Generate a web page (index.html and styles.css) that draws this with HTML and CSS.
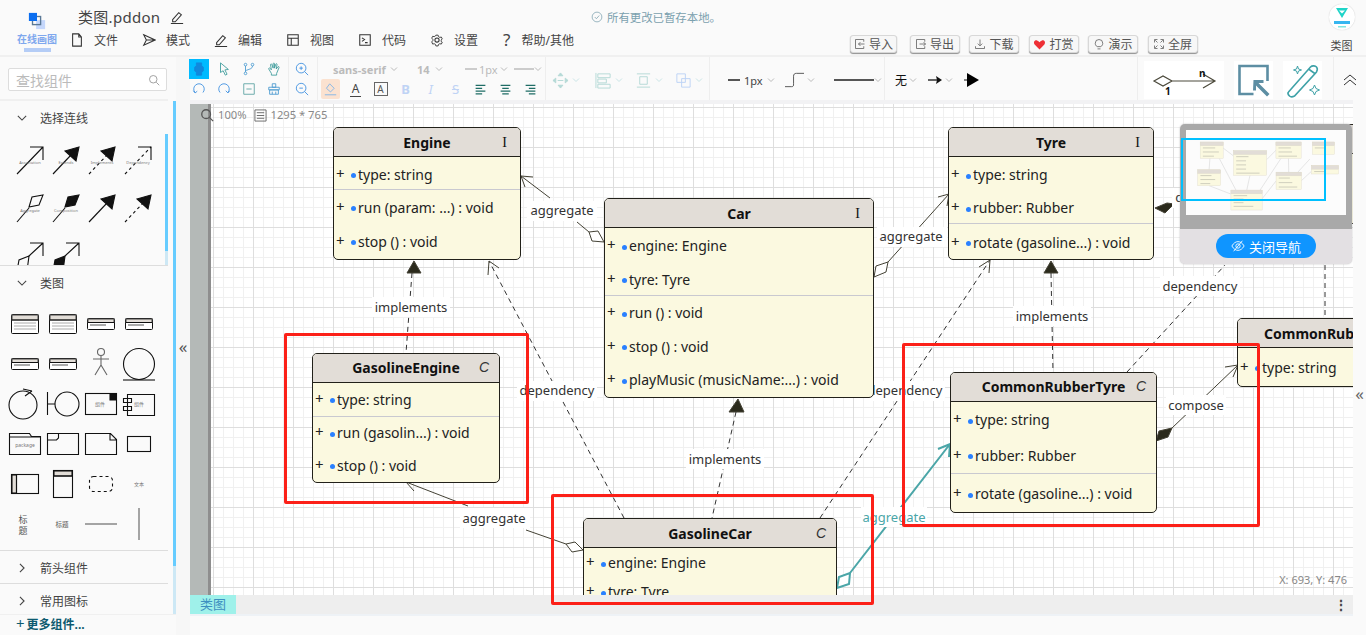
FILE: index.html
```html
<!DOCTYPE html>
<html lang="zh-CN">
<head>
    <meta charset="UTF-8">
    <title>类图.pddon</title>
    <link rel="stylesheet" href="styles.css">
</head>
<body>
    <svg class="defs" width="0" height="0">
        <defs>
            <symbol id="i-doc" viewBox="0 0 16 16"><path d="M3 1h7l3 3.500V15H3zM10 1v3.500h3"/></symbol>
            <symbol id="i-send" viewBox="0 0 16 16"><path d="M2 2l13 6-13 6 3-6zM5 8h10"/></symbol>
            <symbol id="i-pen" viewBox="0 0 16 16"><path d="M3 11l7-8 3 2.500-7 8H3zM1 15.500h14"/></symbol>
            <symbol id="i-layout" viewBox="0 0 16 16"><path d="M2 2h12v12H2zM2 6h12M6 6v8"/></symbol>
            <symbol id="i-term" viewBox="0 0 16 16"><path d="M2 2h12v12H2zM4.500 5.500l3 2-3 2M8 11h3"/></symbol>
            <symbol id="i-gear" viewBox="0 0 16 16"><path d="M6.500 1.500h3l.5 2 1.800 1 2-.5 1.300 2.500-1.500 1.500 0 1-.0 1 1.500 1-1.300 2.500-2-.5-1.800 1-.5 2h-3l-.5-2-1.800-1-2 .5L.9 10.500l1.500-1.500V7L.9 5.500l1.300-2.500 2 .5 1.800-1z" transform="translate(1.200 1.200) scale(.85)"/><circle cx="8" cy="8" r="2.400"/></symbol>
            <symbol id="i-import" viewBox="0 0 16 16"><path d="M13 5V2H2v12h11v-3M14 8H6M8.500 5.500L6 8l2.500 2.500"/></symbol>
            <symbol id="i-export" viewBox="0 0 16 16"><path d="M13 5V2H2v12h11v-3M6 8h8M11.500 5.500L14 8l-2.500 2.500"/></symbol>
            <symbol id="i-down" viewBox="0 0 16 16"><path d="M8 2v8M5 7.500L8 10.500l3-3M2 11v3h12v-3"/></symbol>
            <symbol id="i-bulb" viewBox="0 0 16 16"><path d="M5.500 11.500C3.800 10.300 3 9 3 7a5 5 0 0110 0c0 2-.8 3.300-2.500 4.500zM6 14.500h4"/></symbol>
            <symbol id="i-full" viewBox="0 0 16 16"><path d="M2 6V2h4M10 2h4v4M14 10v4h-4M6 14H2v-4M3 3l3 3M13 3l-3 3M13 13l-3-3M3 13l3-3"/></symbol>
            <symbol id="i-search" viewBox="0 0 16 16"><circle cx="7" cy="7" r="5"/><path d="M11 11l4 4"/></symbol>
            <symbol id="i-chev" viewBox="0 0 8 8"><path d="M1 2.500l3 3 3-3"/></symbol>
            <symbol id="i-circle-check" viewBox="0 0 16 16"><circle cx="8" cy="8" r="6.500"/><path d="M5 8l2.200 2.300L11 6"/></symbol>
            <symbol id="i-shape" viewBox="0 0 16 16"><path d="M5 1h6v3l2 2v4l-2 2v3H5v-3l-2-2V6l2-2z" fill="currentColor"/></symbol>
            <symbol id="i-cursor" viewBox="0 0 16 16"><path d="M4 1l9 7.500-4 .5 2.500 5-2 1-2.500-5L4 12z"/></symbol>
            <symbol id="i-branch" viewBox="0 0 16 16"><circle cx="4" cy="3" r="1.500"/><circle cx="12" cy="3" r="1.500"/><circle cx="4" cy="13" r="1.500"/><path d="M4 4.500v7M12 4.500C12 8 8 8 4 10"/></symbol>
            <symbol id="i-hand" viewBox="0 0 16 16"><path d="M5 13L2 8c-.5-1 1-1.800 1.600-.8L5 9 4 3c0-1 1.500-1 1.700 0L7 7V2c0-1 1.600-1 1.600 0v5l1.400-4.500c.3-1 1.700-.6 1.500.4L10.500 8l2-2.500c.7-.8 1.800 0 1.200 1L11 13v2H5z"/></symbol>
            <symbol id="i-undo" viewBox="0 0 16 16"><path d="M3.500 12A6 6 0 1112.500 12M1.500 10l2 2.500 2.500-2"/></symbol>
            <symbol id="i-redo" viewBox="0 0 16 16"><path d="M3.500 12A6 6 0 1112.500 12M10 10l2.500 2.500 2-2.500"/></symbol>
            <symbol id="i-minus" viewBox="0 0 16 16"><path d="M2 2h12v12H2zM5 8h6"/></symbol>
            <symbol id="i-brush" viewBox="0 0 16 16"><path d="M6 2h4v4H6zM2 6h12v3H2zM3 9h10v5H3zM6 11v3M10 11v3"/></symbol>
            <symbol id="i-zoomin" viewBox="0 0 16 16"><circle cx="7" cy="7" r="5.500"/><path d="M11 11l4 4M5 7h4M7 5v4"/></symbol>
            <symbol id="i-zoomout" viewBox="0 0 16 16"><circle cx="7" cy="7" r="5.500"/><path d="M11 11l4 4M5 7h4"/></symbol>
            <symbol id="i-fill" viewBox="0 0 16 16"><path d="M7 1l5.500 5.500L8 11 3 6.500zM1 14.500h14"/></symbol>
            <symbol id="i-align-l" viewBox="0 0 16 16"><path d="M2 3h12M2 6.500h8M2 10h12M2 13.500h8"/></symbol>
            <symbol id="i-align-c" viewBox="0 0 16 16"><path d="M2 3h12M4 6.500h8M2 10h12M4 13.500h8"/></symbol>
            <symbol id="i-align-r" viewBox="0 0 16 16"><path d="M2 3h12M6 6.500h8M2 10h12M6 13.500h8"/></symbol>
            <symbol id="i-move" viewBox="0 0 18 18"><path d="M9 1l2.500 3h-5zM9 17l2.500-3h-5zM1 9l3-2.500v5zM17 9l-3-2.500v5z" fill="currentColor"/><path d="M6 9h6"/></symbol>
            <symbol id="i-stack" viewBox="0 0 18 18"><path d="M1 1v16M3 2h13v4H3zM3 7.500h9v4H3zM3 13h13v4H3z"/></symbol>
            <symbol id="i-space" viewBox="0 0 18 18"><path d="M2 2h14M2 16h14M5 5h8v8H5z"/></symbol>
            <symbol id="i-layer" viewBox="0 0 18 18"><path d="M2 2h9v9H2zM7 7h9v9H7z"/></symbol>
        </defs>
    </svg>

    <header class="topbar">
        <div class="logo">
            <svg class="logo-mark" viewBox="0 0 20 20"><rect x="9" y="9" width="10" height="10" fill="#c5d7fb"/><rect x="5" y="5" width="9" height="9" fill="none" stroke="#5a7896" stroke-width="1.500"/><rect x="1" y="1" width="9" height="9" fill="#0b6ef0"/></svg>
            <span class="logo-name">在线画图</span>
            <span class="logo-bar"></span>
        </div>
        <div class="top-main">
            <div class="title-row">
                <span class="file-name">类图.pddon</span>
                <svg class="ico ico-title"><use href="#i-pen"/></svg>
            </div>
            <nav class="menu">
                <a class="menu-item"><svg class="ico"><use href="#i-doc"/></svg>文件</a>
                <a class="menu-item"><svg class="ico"><use href="#i-send"/></svg>模式</a>
                <a class="menu-item"><svg class="ico"><use href="#i-pen"/></svg>编辑</a>
                <a class="menu-item"><svg class="ico"><use href="#i-layout"/></svg>视图</a>
                <a class="menu-item"><svg class="ico"><use href="#i-term"/></svg>代码</a>
                <a class="menu-item"><svg class="ico"><use href="#i-gear"/></svg>设置</a>
                <a class="menu-item"><span class="ico-q">?</span>帮助/其他</a>
            </nav>
        </div>
        <div class="save-state"><svg class="ico-save"><use href="#i-circle-check"/></svg>所有更改已暂存本地。</div>
        <div class="top-actions">
            <button class="act act-1"><svg class="ico-act"><use href="#i-import"/></svg>导入</button>
            <button class="act"><svg class="ico-act"><use href="#i-export"/></svg>导出</button>
            <button class="act"><svg class="ico-act"><use href="#i-down"/></svg>下载</button>
            <button class="act"><svg class="ico-heart" viewBox="0 0 16 16"><path d="M8 14L2 8c-2-2.500 0-6 3-5 1.300.4 2.300 1.200 3 2.200C8.700 4.200 9.700 3.400 11 3c3-1 5 2.500 3 5z"/></svg>打赏</button>
            <button class="act"><svg class="ico-act"><use href="#i-bulb"/></svg>演示</button>
            <button class="act"><svg class="ico-act"><use href="#i-full"/></svg>全屏</button>
        </div>
        <div class="user">
            <span class="avatar"><svg viewBox="0 0 26 26"><path d="M7 4h12l-6 10z" fill="#1fd4c8"/><path d="M10 6.500h6l-3 3z" fill="#fff"/><rect x="5" y="17" width="16" height="3" fill="#37b6f0"/><rect x="9" y="22" width="8" height="1.500" fill="#7fe6e0"/></svg></span>
            <span class="user-name">类图</span>
        </div>
    </header>

    <div class="workspace">
        <aside class="sidebar">
            <div class="search-wrap">
                <div class="search">查找组件<svg class="ico-find"><use href="#i-search"/></svg></div>
            </div>
            <div class="panels">
                <section class="panel panel-lines">
                    <h3 class="panel-head"><svg class="ico-fold" viewBox="0 0 12 12"><path d="M1 3.500l5 5 5-5"/></svg>选择连线</h3>
                    <svg class="palette palette-lines" viewBox="0 0 165 136">
                        <g class="sk">
                            <g transform="translate(17 16)"><path d="M0 29L26 2M13 2h13v13"/><text class="tiny" x="13" y="19">Association</text></g>
                            <g transform="translate(53 16)"><path d="M0 29l18-19"/><path class="bk" d="M12 6l14-4-3 14z"/><text class="tiny" x="13" y="19">Extends</text></g>
                            <g transform="translate(89 16)"><path class="dash" d="M0 29l18-19"/><path class="bk" d="M12 6l14-4-3 14z"/><text class="tiny" x="13" y="19">Implements</text></g>
                            <g transform="translate(125 16)"><path class="dash" d="M0 29L26 2"/><path d="M13 2h13v13"/><text class="tiny" x="13" y="19">Dependency</text></g>
                            <g transform="translate(17 64)"><path d="M0 29l12-14"/><path d="M12 14l3-10 11-2-4 10z"/><text class="tiny" x="13" y="19">Aggregate</text></g>
                            <g transform="translate(53 64)"><path d="M0 29l12-14"/><path class="bk" d="M12 14l3-10 11-2-4 10z"/><text class="tiny" x="13" y="19">Composition</text></g>
                            <g transform="translate(89 64)"><path d="M0 29l18-19"/><path class="bk" d="M12 6l14-4-3 14z"/></g>
                            <g transform="translate(125 64)"><path class="dash" d="M0 29l18-19"/><path class="bk" d="M12 6l14-4-3 14z"/></g>
                            <g transform="translate(17 112)"><path d="M12 15L26 2M13 2h13v13"/><path d="M12 15l-10 4-2 11h10z"/></g>
                            <g transform="translate(53 112)"><path d="M12 15L26 2M13 2h13v13"/><path class="bk" d="M12 15l-10 4-2 11h10z"/></g>
                        </g>
                    </svg>
                    <span class="scroll-inner"></span>
                </section>
                <section class="panel panel-class">
                    <h3 class="panel-head"><svg class="ico-fold" viewBox="0 0 12 12"><path d="M1 3.500l5 5 5-5"/></svg>类图</h3>
                    <svg class="palette palette-class" viewBox="0 0 165 250">
                        <defs>
                            <g id="m-big"><rect x=".5" y=".5" width="27" height="19" rx="1" fill="#fff" stroke="#111"/><rect x="1" y="1" width="26" height="5" fill="#e2ddd7"/><path d="M1 6h26" stroke="#111"/><path d="M3 9h22M3 12h22M3 15h22" stroke="#aaa"/></g>
                            <g id="m-small"><rect x=".5" y=".5" width="27" height="11" rx="1" fill="#fff" stroke="#111"/><rect x="1" y="1" width="26" height="3.500" fill="#e2ddd7"/><path d="M1 4.500h26" stroke="#111"/><path d="M3 7h16" stroke="#aaa" stroke-width="2"/></g>
                        </defs>
                        <use href="#m-big" x="11" y="19"/><use href="#m-big" x="49" y="19"/><use href="#m-small" x="87" y="23"/><use href="#m-small" x="125" y="23"/>
                        <use href="#m-small" x="11" y="63"/><use href="#m-small" x="49" y="63"/>
                        <g class="sk">
                            <g class="gr"><circle cx="101" cy="57" r="3.500"/><path d="M101 61v9M93 64h16M101 70l-6 10M101 70l6 10"/></g>
                            <circle cx="139" cy="69" r="15.500"/><path d="M123 85h32"/>
                            <circle cx="23" cy="110" r="14"/><path d="M23 94l9 2M25 101l7-5"/>
                            <g transform="translate(0 5)">
                                <path d="M47.500 92v23M48 104h7"/><circle cx="67" cy="104" r="12"/>
                                <rect x="85.500" y="93.500" width="31" height="21"/><path class="bk" d="M110 94h6v6h-6z"/><text class="tiny big" x="100" y="106">组件</text>
                                <path d="M127.500 94.500h27v21h-27zM123.500 98.500h8v4h-8zM123.500 106.500h8v4h-8z"/><text class="tiny big" x="139" y="106">组件</text>
                                <path d="M9.500 133.500v21h31v-18h-9l-2-3zM9.500 137h31"/><text class="tiny big" x="25" y="147">package</text>
                                <path d="M47.500 133.500h31v21h-31zM47.500 140h9l2-2v-4.500"/>
                                <path d="M85.500 133.500h25l6 6v15h-31zM110 134v6h6"/>
                                <rect x="127.500" y="136.500" width="23" height="15"/>
                                <rect x="11.500" y="174.500" width="27" height="19"/><rect x="12" y="175" width="4.500" height="18" fill="#e2ddd7"/><path d="M16.500 175v18"/>
                                <rect x="53.500" y="170.500" width="19" height="27"/><rect x="54" y="171" width="18" height="5" fill="#e2ddd7"/><path d="M54 176h18"/>
                                <rect class="dash" x="89.500" y="176.500" width="23" height="15" rx="4"/>
                                <path class="gr2" d="M85 224h32M139 208v32"/>
                            </g>
                        </g>
                        <text class="tiny big" x="139" y="191">文本</text>
                        <text class="tiny title" x="23" y="228">标</text>
                        <text class="tiny title" x="23" y="239">题</text>
                        <text class="tiny title2" x="62" y="232">标题</text>
                    </svg>
                </section>
                <h3 class="panel-head panel-closed panel-sep"><svg class="ico-fold" viewBox="0 0 12 12"><path d="M3.500 1l5 5-5 5"/></svg>箭头组件</h3>
                <h3 class="panel-head panel-closed"><svg class="ico-fold" viewBox="0 0 12 12"><path d="M3.500 1l5 5-5 5"/></svg>常用图标</h3>
            </div>
            <div class="more"><span class="more-plus">+</span>更多组件...</div>
        </aside>

        <div class="divider">«</div>

        <main class="stage">
            <div class="toolbar">
                <div class="tool-group tools-grid">
                    <span class="tool tool-on"><svg><use href="#i-shape"/></svg></span>
                    <span class="tool teal"><svg><use href="#i-cursor"/></svg></span>
                    <span class="tool bluet"><svg><use href="#i-branch"/></svg></span>
                    <span class="tool teal"><svg><use href="#i-hand"/></svg></span>
                    <span class="tool blue"><svg><use href="#i-undo"/></svg></span>
                    <span class="tool blue"><svg><use href="#i-redo"/></svg></span>
                    <span class="tool teal-d"><svg><use href="#i-minus"/></svg></span>
                    <span class="tool bluet"><svg><use href="#i-brush"/></svg></span>
                </div>
                <div class="tool-group tools-zoom">
                    <span class="tool blue"><svg><use href="#i-zoomin"/></svg></span>
                    <span class="tool blue"><svg><use href="#i-zoomout"/></svg></span>
                </div>
                <div class="tool-group tools-text">
                    <div class="text-top">
                        <span class="pick pick-font">sans-serif<svg class="chev"><use href="#i-chev"/></svg></span>
                        <span class="pick pick-size">14<svg class="chev"><use href="#i-chev"/></svg></span>
                        <span class="pick pick-line"><i class="bar bar-s"></i>1px<svg class="chev"><use href="#i-chev"/></svg></span>
                        <span class="pick pick-style"><i class="bar bar-l"></i><svg class="chev"><use href="#i-chev"/></svg></span>
                    </div>
                    <div class="text-bottom">
                        <span class="tool-s tool-fill"><svg><use href="#i-fill"/></svg></span>
                        <span class="tool-s glyph">A<i></i></span>
                        <span class="tool-s glyph-box">A</span>
                        <span class="tool-s fmt b">B</span>
                        <span class="tool-s fmt i">I</span>
                        <span class="tool-s fmt s">S</span>
                        <span class="tool-s dk"><svg><use href="#i-align-l"/></svg></span>
                        <span class="tool-s dk"><svg><use href="#i-align-c"/></svg></span>
                        <span class="tool-s dk"><svg><use href="#i-align-r"/></svg></span>
                    </div>
                </div>
                <div class="tool-group tools-arrange">
                    <span class="arr arr-1"><svg><use href="#i-move"/></svg><svg class="chev"><use href="#i-chev"/></svg></span>
                    <span class="arr"><svg><use href="#i-stack"/></svg><svg class="chev"><use href="#i-chev"/></svg></span>
                    <span class="arr"><svg><use href="#i-space"/></svg><svg class="chev"><use href="#i-chev"/></svg></span>
                    <span class="arr arr-blue"><svg><use href="#i-layer"/></svg><svg class="chev"><use href="#i-chev"/></svg></span>
                </div>
                <div class="tool-group tools-line">
                    <span class="ln ln-width"><i class="bar bar-d"></i>1px<svg class="chev"><use href="#i-chev"/></svg></span>
                    <span class="ln ln-step"><svg class="step" viewBox="0 0 20 16"><path d="M0 15h7c2 0 2-1 2-3V4c0-2 1-3 3-3h8"/></svg><svg class="chev"><use href="#i-chev"/></svg></span>
                    <span class="ln ln-solid"><i class="bar bar-long"></i><svg class="chev"><use href="#i-chev"/></svg></span>
                </div>
                <div class="tool-group tools-head">
                    <span class="head-none">无<svg class="chev"><use href="#i-chev"/></svg></span>
                    <span class="head-arrow"><svg class="harrow" viewBox="0 0 14 10"><path d="M0 5h9" stroke="#111" stroke-width="1.300"/><path d="M8 1l6 4-6 4 1-4z" fill="#111"/></svg><svg class="chev"><use href="#i-chev"/></svg></span>
                    <span class="head-big"><svg class="hbig" viewBox="0 0 15 14"><path d="M0 7h4" stroke="#111"/><path d="M3 0l12 7-12 7z" fill="#000"/></svg></span>
                </div>
                <div class="tool-group tools-cards">
                    <span class="card card-rel"><svg viewBox="0 0 80 38"><path d="M10 20l9-5 9 5-9 5zM28 20h43M59 13l12 7-12 7" fill="none" stroke="#4c4a3c" stroke-width="1.200"/><text x="21" y="34" class="card-num">1</text><text x="55" y="16" class="card-num">n</text></svg></span>
                    <span class="card card-sel"><svg viewBox="0 0 38 38"><path d="M33 20V5H5v28h14" fill="none" stroke="#5d8ea3" stroke-width="2.600"/><path d="M19 19h10v3h-5l11 11-2.500 2.500-11-11v5h-3z" fill="#5d8ea3"/></svg></span>
                    <span class="card card-wand"><svg viewBox="0 0 38 38"><path d="M5 31L27 6c2-2 5-1 6 0s1 3 0 5L11 35c-2 1-4 1-5 0s-2-3-1-4zM25 8l7 5" fill="none" stroke="#3fa2a8" stroke-width="1.600"/><path d="M14 5l1 3 3 1-3 1-1 3-1-3-3-1 3-1zM31 24l1.500 3.500 3.500 1.500-3.500 1.500L31 34l-1.500-3.500-3.500-1.500 3.500-1.500z" fill="none" stroke="#3fa2a8"/></svg></span>
                </div>
                <div class="tool-fold"><svg viewBox="0 0 14 12"><path d="M1 6l6-5 6 5M1 11l6-5 6 5"/></svg></div>
            </div>

            <div class="canvas-band"></div>
            <div class="canvas">
                <span class="ruler"></span>
                <div class="zoom-info"><svg class="ico-zoominfo"><use href="#i-search"/></svg><span>100%</span><svg class="ico-page" viewBox="0 0 14 14"><path d="M1 1h12v12H1zM3 4h8M3 7h8M3 10h8"/></svg><span>1295 * 765</span></div>

                <svg class="edges" viewBox="190 104 1163 491">
                    <g class="edge">
                        <path d="M521 176l29 22M577 222l12 10M533 177l-12-1 4 11"/>
                        <path class="hollow" d="M589 232l9-1 6 11-12-1z"/>
                        <path class="solid-h" d="M414 261l7 12h-14z"/>
                        <path class="dashed" d="M412 273l-6 80"/>
                        <path class="dashed" d="M624 518L489 261"/>
                        <path d="M488 275l1-14 10 7"/>
                        <path d="M888 262l61-68M938 197l11-3-2 12"/>
                        <path class="hollow" d="M874 277l2-11 12-4-2 10z"/>
                        <path class="solid-h" d="M738 399l6 13h-15z"/>
                        <path class="dashed" d="M736 412l-24 106"/>
                        <path class="dashed" d="M820 518L990 260"/>
                        <path d="M979 267l11-7-1 13"/>
                        <path class="solid-h" d="M1051 261l7 12h-14z"/>
                        <path class="dashed" d="M1051 273l2 99"/>
                        <path class="solid-h" d="M1155 208l12-5 7 1-9 9z"/>
                        <path class="dashed" d="M1127 372l98-107"/>
                        <path class="solid-h" d="M1156 441l3-10 13-3-4 9z"/>
                        <path d="M1172 428l66-63M1225 367l13-2-5 12"/>
                        <path class="dashed" d="M1325 265v53"/>
                        <path d="M406 482l62 24M526 530l40 14M418 481l-12 1 8 9"/>
                        <path class="hollow" d="M566 544l9-2 8 8-11 2z"/>
                        <path class="teal-edge" d="M850 573l100-129M938 449l12-5-1 13"/>
                        <path class="teal-edge hollow-t" d="M837 588l2-11 11-4-1 11z"/>
                    </g>
                    <g class="labels">
                        <rect x="527" y="201" width="70" height="20"/><text x="562" y="215">aggregate</text>
                        <rect x="877" y="227" width="70" height="20"/><text x="911" y="241">aggregate</text>
                        <rect x="372" y="297" width="78" height="20"/><text x="411" y="312">implements</text>
                        <rect x="517" y="381" width="80" height="20"/><text x="557" y="395">dependency</text>
                        <rect x="686" y="449" width="78" height="20"/><text x="725" y="464">implements</text>
                        <rect x="865" y="381" width="80" height="20"/><text x="905" y="395">dependency</text>
                        <rect x="1013" y="306" width="78" height="20"/><text x="1052" y="321">implements</text>
                        <rect x="1160" y="276" width="80" height="20"/><text x="1200" y="291">dependency</text>
                        <rect x="1166" y="395" width="60" height="20"/><text x="1196" y="410">compose</text>
                        <rect x="460" y="508" width="70" height="20"/><text x="494" y="523">aggregate</text>
                        <rect x="861" y="507" width="66" height="20"/><text class="teal-text" x="894" y="522">aggregate</text>
                        <rect x="1172" y="188" width="62" height="20"/><text x="1203" y="202">compose</text>
                    </g>
                </svg>

                <article class="cls n-engine">
                    <div class="cls-head"><b>Engine</b><i class="kind">I</i></div>
                    <div class="cls-part">
                        <div class="cls-row"><em>+</em><u></u>type: string</div>
                    </div>
                    <div class="cls-part">
                        <div class="cls-row"><em>+</em><u></u>run (param: ...) : void</div>
                        <div class="cls-row"><em>+</em><u></u>stop () : void</div>
                    </div>
                </article>
                <article class="cls n-car">
                    <div class="cls-head"><b>Car</b><i class="kind">I</i></div>
                    <div class="cls-part">
                        <div class="cls-row"><em>+</em><u></u>engine: Engine</div>
                        <div class="cls-row"><em>+</em><u></u>tyre: Tyre</div>
                    </div>
                    <div class="cls-part">
                        <div class="cls-row"><em>+</em><u></u>run () : void</div>
                        <div class="cls-row"><em>+</em><u></u>stop () : void</div>
                        <div class="cls-row"><em>+</em><u></u>playMusic (musicName:...) : void</div>
                    </div>
                </article>
                <article class="cls n-tyre">
                    <div class="cls-head"><b>Tyre</b><i class="kind">I</i></div>
                    <div class="cls-part">
                        <div class="cls-row"><em>+</em><u></u>type: string</div>
                        <div class="cls-row"><em>+</em><u></u>rubber: Rubber</div>
                    </div>
                    <div class="cls-part">
                        <div class="cls-row"><em>+</em><u></u>rotate (gasoline...) : void</div>
                    </div>
                </article>
                <article class="cls n-gas-engine">
                    <div class="cls-head head-up"><b>GasolineEngine</b><i class="kind kind-c">C</i></div>
                    <div class="cls-part">
                        <div class="cls-row"><em>+</em><u></u>type: string</div>
                    </div>
                    <div class="cls-part">
                        <div class="cls-row"><em>+</em><u></u>run (gasolin...) : void</div>
                        <div class="cls-row"><em>+</em><u></u>stop () : void</div>
                    </div>
                </article>
                <article class="cls n-common-tyre">
                    <div class="cls-head head-up"><b>CommonRubberTyre</b><i class="kind kind-c">C</i></div>
                    <div class="cls-part">
                        <div class="cls-row row-tall"><em>+</em><u></u>type: string</div>
                        <div class="cls-row row-tall"><em>+</em><u></u>rubber: Rubber</div>
                    </div>
                    <div class="cls-part">
                        <div class="cls-row row-last"><em>+</em><u></u>rotate (gasoline...) : void</div>
                    </div>
                </article>
                <article class="cls n-gas-car">
                    <div class="cls-head"><b>GasolineCar</b><i class="kind kind-c">C</i></div>
                    <div class="cls-part">
                        <div class="cls-row row-short"><em>+</em><u></u>engine: Engine</div>
                        <div class="cls-row row-short"><em>+</em><u></u>tyre: Tyre</div>
                    </div>
                </article>
                <article class="cls n-common">
                    <div class="cls-head head-left"><b>CommonRubber</b></div>
                    <div class="cls-part">
                        <div class="cls-row row-single"><em>+</em><u></u>type: string</div>
                    </div>
                </article>
                <article class="cls n-rubber">
                    <div class="cls-head"></div>
                </article>

                <div class="coords">X: 693, Y: 476</div>

                <div class="minimap">
                    <div class="mini-view">
                        <svg class="mini-svg" viewBox="0 0 160 85">
                            <g transform="translate(-26.800 -3.600) scale(.123)">
                                <g stroke="#ddd" stroke-width="6" fill="none">
                                    <path d="M520 176L604 240M412 260L406 353M624 518L489 261M874 270L949 194M738 398L712 518M820 518L990 260M1051 260L1053 372M837 588L950 444M406 482L583 550M1156 441L1238 365M1127 372L1225 265"/>
                                </g>
                                <g class="mini-nodes">
                                    <rect x="333" y="127" width="187" height="133"/><rect class="mh" x="333" y="127" width="187" height="30"/>
                                    <rect x="604" y="198" width="269" height="200"/><rect class="mh" x="604" y="198" width="269" height="31"/>
                                    <rect x="949" y="127" width="205" height="133"/><rect class="mh" x="949" y="127" width="205" height="30"/>
                                    <rect x="313" y="353" width="186" height="129"/><rect class="mh" x="313" y="353" width="186" height="30"/>
                                    <rect x="950" y="372" width="206" height="141"/><rect class="mh" x="950" y="372" width="206" height="30"/>
                                    <rect x="583" y="518" width="254" height="162"/><rect class="mh" x="583" y="518" width="254" height="30"/>
                                    <rect x="1238" y="318" width="220" height="69"/><rect class="mh" x="1238" y="318" width="220" height="30"/>
                                    <rect x="1245" y="127" width="180" height="100"/><rect class="mh" x="1245" y="127" width="180" height="30"/>
                                </g>
                                <path class="mini-text" d="M355 175h100M355 208h130M355 242h90M626 246h100M626 280h80M626 313h80M626 347h80M626 380h190M970 175h100M970 208h110M970 242h150M335 400h90M335 432h120M335 465h80M972 420h90M972 457h110M972 493h150M605 563h110M605 591h80M605 620h80M605 650h160M1260 367h90M1265 175h90"/>
                            </g>
                        </svg>
                        <span class="mini-frame"></span>
                    </div>
                    <div class="mini-foot">
                        <button class="mini-btn"><svg class="ico-eye" viewBox="0 0 16 16"><path d="M1 8c2-3.500 4.500-5 7-5s5 1.500 7 5c-2 3.500-4.500 5-7 5s-5-1.500-7-5zM3 14L13 2"/><circle cx="8" cy="8" r="2.500"/></svg>关闭导航</button>
                    </div>
                </div>
            </div>
            <div class="tabs">
                <span class="tab">类图</span>
                <span class="tabs-more">⋮</span>
            </div>
        </main>
        <div class="edge-strip">«</div>
    </div>
    <div class="statusline"></div>

    <div class="mark mark-1"></div>
    <div class="mark mark-2"></div>
    <div class="mark mark-3"></div>
</body>
</html>
```

FILE: styles.css
```css
* {
    box-sizing: border-box;
}

html, body {
    margin: 0;
    height: 100%;
    overflow: hidden;
}

body {
    position: relative;
    width: 1366px;
    height: 635px;
    background-color: #fafafa;
    color: #444444;
    font-family: "Noto Sans", "Noto Sans CJK SC", sans-serif;
    font-size: 12px;
}

.defs {
    position: absolute;
}

svg {
    display: block;
    fill: none;
    stroke: currentColor;
}

/* top bar */
.topbar {
    display: flex;
    height: 57px;
    border-bottom: 2px solid #f0f0f0;
}

.logo {
    display: flex;
    flex-direction: column;
    align-items: center;
    width: 70px;
    padding: 12px 0 0 4px;
    flex: none;
}

.logo-mark {
    width: 18px;
    height: 18px;
    stroke: none;
}

.logo-name {
    margin-top: 3px;
    color: #7fa8ee;
    font-size: 10px;
    font-weight: 700;
    line-height: 13px;
    white-space: nowrap;
}

.logo-bar {
    display: block;
    width: 27px;
    height: 4px;
    margin-top: 2px;
    flex: none;
    background-color: #b5cdf6;
}

.top-main {
    width: 521px;
    flex: none;
}

.title-row {
    display: flex;
    align-items: center;
    gap: 10px;
    height: 30px;
    padding: 3px 0 0 8px;
}

.file-name {
    font-size: 15px;
    letter-spacing: .3px;
    color: #444444;
}

.ico {
    width: 14px;
    height: 14px;
    stroke: #333333;
    stroke-width: 1.200;
}

.menu {
    display: flex;
    height: 20px;
}

.menu-item {
    display: flex;
    align-items: center;
    gap: 10px;
    width: 72px;
    flex: none;
    white-space: nowrap;
    font-size: 12px;
    color: #444444;
}

.ico-q {
    width: 13px;
    font-size: 17px;
    line-height: 20px;
    text-align: center;
}

.save-state {
    display: flex;
    align-items: center;
    gap: 4px;
    width: 259px;
    flex: none;
    height: 33px;
    color: #7ba0ae;
    font-size: 11.400px;
    white-space: nowrap;
}

.ico-save {
    width: 12px;
    height: 12px;
}

.top-actions {
    display: flex;
    gap: 9.500px;
    flex: none;
    padding-top: 35px;
}

.act {
    display: flex;
    align-items: center;
    justify-content: center;
    gap: 3px;
    width: 50px;
    height: 18px;
    padding: 0;
    border: 1px solid #d8d8d8;
    border-radius: 3px;
    background-color: #f7f7f7;
    box-shadow: 0 1px 1px #8f8f8f;
    color: #555555;
    font-family: inherit;
    font-size: 12px;
}

.act-1 {
    width: 47px;
    margin-right: 3px;
}

.ico-act {
    width: 12px;
    height: 12px;
    stroke: #555555;
}

.ico-heart {
    width: 13px;
    height: 13px;
    fill: #ee2f35;
    stroke: none;
}

.user {
    display: flex;
    flex-direction: column;
    align-items: center;
    margin-left: 131px;
    padding-top: 4px;
}

.avatar {
    display: block;
    width: 26px;
    height: 26px;
    border-radius: 50%;
    background-color: #ffffff;
    box-shadow: 0 0 1px #bbbbbb;
}

.avatar svg {
    stroke: none;
}

.user-name {
    margin-top: 8px;
    font-size: 11px;
    line-height: 16px;
}

/* layout under the top bar */
.workspace {
    display: flex;
    height: 578px;
}

.sidebar {
    display: flex;
    flex-direction: column;
    width: 176px;
    flex: none;
}

.search-wrap {
    height: 44px;
    padding: 11px 1px 0 8px;
    border-bottom: 2px solid #f0f0f0;
    margin-right: 8px;
}

.search {
    display: flex;
    align-items: center;
    justify-content: space-between;
    height: 23px;
    padding: 0 6px 0 7px;
    border: 1px solid #dddddd;
    border-radius: 2px;
    background-color: #ffffff;
    color: #bbbbbb;
    font-size: 14px;
}

.ico-find {
    width: 12px;
    height: 12px;
    stroke: #999999;
    stroke-width: 1.200;
}

.panels {
    position: relative;
    height: 513px;
    flex: none;
    border-right: 3px solid #cde8f5;
}

.panels::after {
    content: "";
    position: absolute;
    top: 0;
    right: -3px;
    width: 3px;
    height: 465px;
    background-color: #66ccff;
}

.panel {
    position: relative;
    margin-right: 5px;
    border-bottom: 1px solid #dddddd;
}

.panel-lines {
    height: 165px;
    overflow: hidden;
}

.panel-class {
    height: 285px;
    overflow: hidden;
    border-bottom: 1px solid #dddddd;
}

.panel-head {
    display: flex;
    align-items: center;
    gap: 13px;
    height: 33px;
    margin: 0 5px 0 0;
    padding-left: 17px;
    font-size: 12px;
    font-weight: 400;
    color: #444444;
}

.panel-closed {
    height: 33px;
    padding-top: 1px;
}

.panel-sep {
    border-bottom: 1px solid #dddddd;
}

.ico-fold {
    width: 10px;
    height: 10px;
    stroke: #444444;
    stroke-width: 1.300;
}

.palette {
    position: absolute;
    left: 0;
    width: 165px;
}

.palette-lines {
    top: 28px;
    height: 136px;
}

.palette-class {
    top: 29px;
    height: 250px;
}

.palette .sk {
    stroke: #111111;
    stroke-width: 1.100;
}

.palette .gr {
    stroke: #666666;
}

.palette .gr2 {
    stroke: #888888;
    stroke-width: 1.500;
}

.palette .bk {
    fill: #111111;
}

.palette .dash {
    stroke-dasharray: 3 3;
}

.tiny {
    fill: #777777;
    stroke: none;
    font-size: 4px;
    text-anchor: middle;
}

.tiny.big {
    font-size: 5px;
}

.tiny.title {
    font-size: 9px;
    fill: #555555;
}

.tiny.title2 {
    font-size: 6.500px;
    fill: #555555;
}

.scroll-inner {
    position: absolute;
    top: 33px;
    right: 0;
    width: 3px;
    height: 132px;
    background: linear-gradient(#66ccff 117px, #cde8f5 117px);
}

.more {
    height: 21px;
    padding-left: 16px;
    color: #0d5a70;
    font-size: 12px;
    font-weight: 700;
    line-height: 20px;
    border-top: 1px solid #f0f0f0;
    white-space: nowrap;
}

.more-plus {
    margin-right: 2px;
    font-size: 15px;
    font-weight: 400;
    line-height: 17px;
}

.divider {
    display: flex;
    align-items: center;
    justify-content: center;
    width: 14px;
    flex: none;
    background-color: #f7f7f7;
    color: #555555;
    font-size: 17px;
    height: 578px;
}

.stage {
    width: 1163px;
    flex: none;
}

/* toolbar */
.toolbar {
    display: flex;
    height: 43px;
    margin-left: -3px;
    width: 1176px;
}

.tool-group {
    flex: none;
    border-right: 1px solid #eeeeee;
}

.tools-grid {
    display: grid;
    grid-template-columns: repeat(4, 25px);
    grid-auto-rows: 20px;
    width: 102px;
    padding-top: 2px;
}

.tool {
    display: flex;
    align-items: center;
    justify-content: center;
    width: 20px;
    height: 20px;
    margin-left: 2px;
}

.tool svg {
    width: 14px;
    height: 14px;
}

.tool-on {
    background-color: #00baff;
    color: #1188dd;
}

.teal {
    color: #3e9c9c;
}

.bluet {
    color: #4a9ad0;
}

.blue {
    color: #3d8fe0;
}

.teal-d {
    color: #5da4a4;
}

.tools-zoom {
    display: grid;
    grid-auto-rows: 20px;
    width: 29px;
    padding-top: 2px;
    padding-left: 1px;
}

.tools-text {
    width: 228px;
    padding-top: 2px;
}

.text-top {
    position: relative;
    height: 20px;
    display: flex;
    align-items: center;
    padding-left: 15px;
    color: #bbbbbb;
    font-size: 11px;
}

.pick {
    display: flex;
    align-items: center;
    flex: none;
    white-space: nowrap;
}

.pick-font {
    width: 84px;
    font-weight: 700;
    gap: 4px;
}

.pick-size {
    width: 48px;
    gap: 5px;
    font-weight: 700;
}

.pick-line {
    width: 49px;
    gap: 2px;
}

.bar {
    display: block;
    height: 2px;
    flex: none;
    background-color: #cccccc;
}

.bar-s {
    width: 12px;
}

.bar-l {
    width: 20px;
}

.bar-d {
    width: 12px;
    background-color: #555555;
}

.bar-long {
    width: 40px;
    background-color: #555555;
}

.chev {
    width: 8px;
    height: 8px;
    flex: none;
    stroke: #aaaaaa;
    stroke-width: .8;
}

.text-bottom {
    display: flex;
    height: 20px;
    padding-left: 3px;
}

.tool-s {
    display: flex;
    align-items: center;
    justify-content: center;
    width: 25px;
    height: 20px;
    flex: none;
}

.tool-s svg {
    width: 13px;
    height: 13px;
}

.tool-fill {
    width: 19px;
    margin-right: 3px;
    background-color: #fbe2d0;
    border-radius: 2px;
    color: #73b0ea;
}

.glyph {
    position: relative;
    color: #444444;
    font-size: 12px;
    line-height: 14px;
    flex-direction: column;
}

.glyph i {
    display: block;
    width: 11px;
    height: 1px;
    background-color: #444444;
}

.glyph-box {
    color: #555555;
    font-size: 10px;
}

.glyph-box::before {
    content: "";
    position: absolute;
    width: 12px;
    height: 12px;
    border: 1px solid #666666;
}

.fmt {
    color: #bfd3f5;
    font-size: 13px;
}

.fmt.b {
    font-weight: 700;
}

.fmt.i {
    font-style: italic;
}

.fmt.s {
    text-decoration: line-through;
}

.dk {
    color: #1f6d66;
    stroke-width: 1.500;
}

.tools-arrange {
    display: flex;
    width: 164px;
    align-items: center;
    padding-left: 6px;
    padding-top: 3px;
    color: #b4d9d6;
}

.arr {
    display: flex;
    align-items: center;
    gap: 3px;
    width: 40px;
    flex: none;
}

.arr svg {
    width: 17px;
    height: 17px;
}

.arr svg.chev {
    width: 8px;
    height: 8px;
    stroke: #bcdde0;
}

.arr-1 {
    width: 43px;
}

.arr-blue {
    color: #bcd2f5;
}

.tools-line {
    display: flex;
    align-items: center;
    width: 175px;
    padding-left: 18px;
    padding-top: 3px;
    font-size: 11px;
    color: #444444;
}

.ln {
    display: flex;
    align-items: center;
    flex: none;
}

.ln-width {
    width: 57px;
    gap: 4px;
}

.ln-step {
    width: 49px;
    gap: 3px;
}

.step {
    width: 19px;
    height: 16px;
    stroke: #555555;
}

.ln-solid {
    gap: 0;
}

.tools-head {
    display: flex;
    align-items: center;
    width: 253px;
    padding-left: 10px;
    padding-top: 3px;
    color: #111111;
    font-size: 12px;
}

.head-none {
    display: flex;
    align-items: center;
    gap: 2px;
    width: 33px;
    flex: none;
}

.head-arrow {
    display: flex;
    align-items: center;
    gap: 3px;
    width: 36px;
    flex: none;
}

.harrow {
    width: 14px;
    height: 10px;
    stroke: none;
}

.hbig {
    width: 15px;
    height: 14px;
    stroke: none;
}

.tools-cards {
    display: flex;
    align-items: center;
    gap: 10px;
    width: 196px;
    padding-left: 6px;
    padding-top: 3px;
}

.card {
    display: block;
    height: 38px;
    background-color: #ffffff;
    flex: none;
}

.card svg {
    width: 100%;
    height: 100%;
    stroke: none;
}

.card-rel {
    width: 80px;
}

.card-sel {
    width: 39px;
}

.card-wand {
    width: 39px;
}

.card-num {
    fill: #111111;
    font-size: 10px;
    font-weight: 700;
}

.tool-fold {
    display: flex;
    align-items: center;
    padding: 3px 0 0 9px;
}

.tool-fold svg {
    width: 14px;
    height: 12px;
    stroke: #333333;
}

.canvas-band {
    height: 4px;
    background-color: #f2f2f4;
}

/* canvas */
.canvas {
    position: relative;
    height: 491px;
    overflow: hidden;
    background-color: #ffffff;
    background-image:
        linear-gradient(#dedede 1px, transparent 1px),
        linear-gradient(90deg, #dedede 1px, transparent 1px),
        linear-gradient(#f0f0f0 1px, transparent 1px),
        linear-gradient(90deg, #f0f0f0 1px, transparent 1px);
    background-size: 40px 40px, 40px 40px, 10px 10px, 10px 10px;
    background-position: 23px 3px, 23px 3px, 3px 3px, 3px 3px;
}

.ruler {
    position: absolute;
    left: 0;
    top: 0;
    bottom: 0;
    width: 21px;
    background-color: #b4b9b7;
    border-right: 3px solid #8e8e8e;
}

.zoom-info {
    position: absolute;
    left: 10px;
    top: 4px;
    display: flex;
    align-items: center;
    gap: 4px;
    color: #888888;
    font-size: 11.200px;
    line-height: 14px;
}

.ico-zoominfo {
    width: 14px;
    height: 14px;
    stroke: #555555;
    stroke-width: 1.500;
}

.ico-page {
    width: 13px;
    height: 13px;
    margin-left: 3px;
    stroke: #666666;
}

.edges {
    position: absolute;
    left: 0;
    top: 0;
    width: 1163px;
    height: 491px;
}

.edge {
    stroke: #444235;
    stroke-width: 1;
}

.dashed {
    stroke-dasharray: 5 4;
    stroke: #333333;
}

.hollow {
    fill: #ffffff;
}

.solid-h {
    fill: #2b2a1c;
}

.teal-edge {
    stroke: #4ba6a8;
    stroke-width: 2;
}

.hollow-t {
    fill: #ffffff;
}

.labels rect {
    fill: #ffffff;
    stroke: none;
}

.labels text {
    fill: #333333;
    stroke: none;
    font-size: 13px;
    text-anchor: middle;
}

.labels .teal-text {
    fill: #4ba6a8;
}

.cls {
    position: absolute;
    overflow: hidden;
    border: 1px solid #22211a;
    border-radius: 5px;
    background-color: #fbf9e0;
    color: #222222;
    font-size: 14px;
}

.cls-head {
    position: relative;
    height: 29px;
    border-bottom: 1px solid #22211a;
    background-color: #e2ddd7;
    color: #111111;
    font-size: 14px;
    line-height: 29px;
    text-align: center;
}

.head-up {
    line-height: 27px;
}

.head-left {
    padding-left: 26px;
    text-align: left;
    white-space: nowrap;
}

.kind {
    position: absolute;
    top: 0;
    right: 13px;
    font-family: "Liberation Serif", serif;
    font-style: normal;
    font-size: 14px;
}

.kind-c {
    font-family: "Liberation Sans", sans-serif;
    font-style: italic;
    font-size: 14px;
    right: 10px;
    color: #333333;
}

.cls-part + .cls-part {
    border-top: 1px solid #c9c9d0;
}

.cls-row {
    display: flex;
    align-items: center;
    height: 33.500px;
    padding-left: 2px;
    white-space: pre;
}

.cls-row em {
    width: 15px;
    margin-top: -3px;
    flex: none;
    font-style: normal;
    font-size: 15px;
}

.cls-row u {
    width: 5px;
    height: 5px;
    margin: 3px 2px 0 0;
    flex: none;
    border-radius: 50%;
    background-color: #2a80ff;
}

.row-tall {
    height: 35.500px;
}

.row-last {
    height: 39px;
}

.row-short {
    height: 29px;
}

.row-single {
    height: 38px;
}

.n-engine {
    left: 143px;
    top: 23px;
    width: 188px;
    height: 133px;
}

.n-engine .cls-part .cls-row {
    height: 34px;
}

.n-engine .cls-part:nth-child(2) .cls-row {
    height: 32px;
    padding-top: 2px;
}

.n-car {
    left: 414px;
    top: 94px;
    width: 270px;
    height: 200px;
}

.n-car .cls-part:nth-child(2) .cls-row {
    padding-top: 2px;
}

.n-tyre {
    left: 758px;
    top: 23px;
    width: 206px;
    height: 133px;
}

.n-tyre .cls-row {
    height: 33px;
}

.n-tyre .cls-part:nth-child(2) .cls-row {
    padding-top: 2px;
}

.n-tyre .cls-part:last-child .cls-row {
    height: 36px;
}

.n-gas-engine {
    left: 122px;
    top: 249px;
    width: 188px;
    height: 130px;
}

.n-gas-engine .cls-row {
    height: 32.500px;
}

.n-common-tyre {
    left: 760px;
    top: 268px;
    width: 207px;
    height: 141px;
}

.n-gas-car {
    left: 393px;
    top: 414px;
    width: 254px;
    height: 162px;
}

.n-common {
    left: 1047px;
    top: 214px;
    width: 220px;
    height: 69px;
}

.n-rubber {
    left: 1150px;
    top: 20px;
    width: 60px;
    height: 100px;
}

.coords {
    position: absolute;
    right: 6px;
    bottom: 8px;
    color: #888888;
    font-size: 11px;
    line-height: 14px;
}

/* navigator */
.minimap {
    position: absolute;
    left: 990px;
    top: 20px;
    width: 172px;
    height: 140px;
    border-radius: 5px;
    overflow: hidden;
    background-color: #e3e0e3;
    box-shadow: 0 0 2px #bbbbbb;
}

.mini-view {
    position: relative;
    height: 105px;
    padding: 6px;
    background-color: #a9a9a9;
}

.mini-svg {
    width: 160px;
    height: 85px;
    stroke: none;
    background-color: #fcfcfc;
}

.mini-nodes rect {
    fill: #fbf9e0;
    stroke: #ddd8c8;
    stroke-width: 3;
}

.mini-nodes .mh {
    fill: #e2ddd7;
}

.mini-text {
    stroke: #b5b5a8;
    stroke-width: 5;
}

.mini-frame {
    position: absolute;
    left: 1px;
    top: 14px;
    width: 145px;
    height: 63px;
    border: 2px solid #00c0ff;
}

.mini-foot {
    display: flex;
    justify-content: center;
    padding-top: 5px;
}

.mini-btn {
    display: flex;
    align-items: center;
    justify-content: center;
    gap: 4px;
    width: 100px;
    height: 24px;
    padding: 0;
    border: none;
    border-radius: 12px;
    background-color: #0f95ff;
    color: #ffffff;
    font-family: inherit;
    font-size: 13px;
}

.ico-eye {
    width: 14px;
    height: 14px;
}

/* tabs */
.tabs {
    display: flex;
    align-items: center;
    justify-content: space-between;
    height: 19px;
    padding-right: 5px;
    background-color: #eeeeee;
}

.tab {
    width: 46px;
    height: 19px;
    background-color: #9ff1ea;
    color: #3d8fc0;
    font-size: 13px;
    line-height: 19px;
    text-align: center;
}

.tabs-more {
    color: #444444;
    font-size: 14px;
    font-weight: 700;
}

.edge-strip {
    display: flex;
    align-items: center;
    justify-content: center;
    flex: none;
    width: 13px;
    padding-top: 94px;
    color: #666666;
    font-size: 17px;
    height: 578px;
}

.statusline {
    position: absolute;
    left: 190px;
    top: 614px;
    width: 1163px;
    height: 2px;
    background-color: #eef2f6;
}

/* red marks drawn over the screenshot */
.mark {
    position: absolute;
    border: 3px solid #fc2018;
    border-radius: 2px;
    pointer-events: none;
}

.mark-1 {
    left: 284px;
    top: 333px;
    width: 245px;
    height: 171px;
}

.mark-2 {
    left: 551px;
    top: 494px;
    width: 323px;
    height: 111px;
}

.mark-3 {
    left: 902px;
    top: 343px;
    width: 358px;
    height: 184px;
}
```
